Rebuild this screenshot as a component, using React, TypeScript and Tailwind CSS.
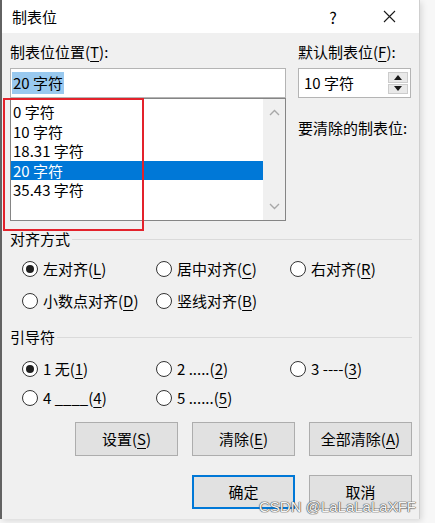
import React from "react";

type RadioItem = { label: string; key: string; checked?: boolean };

function Mn({ text, k }: { text: string; k: string }) {
  // text followed by (K) with the key underlined
  return (
    <span>
      {text}(<u className="underline-offset-[3px]">{k}</u>)
    </span>
  );
}

function Radio({ item }: { item: RadioItem }) {
  return (
    <div className="flex items-center h-[20px]">
      <div className="w-[16px] h-[16px] rounded-full border border-[#333333] bg-white flex items-center justify-center shrink-0">
        {item.checked && <div className="w-[8px] h-[8px] rounded-full bg-[#1f1f1f]" />}
      </div>
      <div className="ml-[5px] leading-[20px] whitespace-pre">
        <Mn text={item.label} k={item.key} />
      </div>
    </div>
  );
}

function Group({ title, lineWidth }: { title: string; lineWidth: string }) {
  return (
    <div className="flex items-center h-[20px] w-[402px]">
      <span className="leading-[20px]">{title}</span>
      <div className={`ml-auto h-px bg-[#dadada] ${lineWidth}`} />
    </div>
  );
}

function Button({ children, primary }: { children: React.ReactNode; primary?: boolean }) {
  return (
    <div
      className={
        "w-[103px] h-[34px] flex items-center justify-center bg-[#e1e1e1] leading-[20px] " +
        (primary
          ? "border border-[#0078d7] shadow-[inset_0_0_0_1px_#0078d7]"
          : "border border-[#adadad]")
      }
    >
      {children}
    </div>
  );
}

function Chevron({ up }: { up?: boolean }) {
  return (
    <svg width="11" height="7" viewBox="0 0 11 7" className="block">
      <polyline
        points={up ? "1,6 5.5,1.5 10,6" : "1,1 5.5,5.5 10,1"}
        fill="none"
        stroke="#a8a8a8"
        strokeWidth="1.4"
      />
    </svg>
  );
}

const tabs = ["0 字符", "10 字符", "18.31 字符", "20 字符", "35.43 字符"];

const alignRadios: RadioItem[] = [
  { label: "左对齐", key: "L", checked: true },
  { label: "居中对齐", key: "C" },
  { label: "右对齐", key: "R" },
  { label: "小数点对齐", key: "D" },
  { label: "竖线对齐", key: "B" },
];

const leaderRadios: RadioItem[] = [
  { label: "1 无", key: "1", checked: true },
  { label: "2 .....", key: "2" },
  { label: "3 ----", key: "3" },
  { label: "4 ____", key: "4" },
  { label: "5 ......", key: "5" },
];

export default function App() {
  return (
    <div className="w-[435px] h-[523px] relative overflow-hidden bg-[#f7f7f7] text-[15px] text-black font-['Noto_Sans_CJK_SC',sans-serif]">
      <div className="w-[420px] h-[519px] bg-[#f0f0f0] border-l-2 border-[#626262] border-r border-r-[#cfcfcf] shadow-[2px_2px_6px_rgba(0,0,0,0.12)] flex flex-col">
        {/* title bar */}
        <div className="h-[33px] bg-white flex items-center pl-[10px] shrink-0">
          <span className="leading-[20px]">制表位</span>
          <div className="ml-auto w-[40px] flex justify-center leading-[20px] text-[16px]">?</div>
          <div className="ml-[16px] mr-[10px] w-[40px] flex justify-center">
            <svg width="13" height="13" viewBox="0 0 13 13">
              <path d="M1 1 L12 12 M12 1 L1 12" stroke="#1a1a1a" strokeWidth="1.1" />
            </svg>
          </div>
        </div>

        <div className="pl-[8px] flex flex-col">
          {/* top */}
          <div className="flex mt-[9px]">
            <div className="w-[276px] flex flex-col">
              <div className="h-[20px] leading-[20px]">
                <Mn text="制表位位置" k="T" />:
              </div>
              <div className="mt-[6px] h-[30px] border border-[#b4b4b4] bg-white flex items-center pl-[1px]">
                <span className="bg-[#99c9ef] leading-[22px] px-[1px]">20 字符</span>
              </div>
              <div className="h-[123px] border border-[#858585] bg-white flex">
                <div className="flex-1 pt-[3px] flex flex-col">
                  {tabs.map((t) => (
                    <div
                      key={t}
                      className={
                        "h-[19.5px] leading-[19.5px] pl-[2px] " +
                        (t === "20 字符" ? "bg-[#0078d7] text-white" : "")
                      }
                    >
                      {t}
                    </div>
                  ))}
                </div>
                <div className="w-[22px] bg-[#f0f0f0] flex flex-col items-center justify-between py-[10px]">
                  <Chevron up />
                  <Chevron />
                </div>
              </div>
            </div>

            <div className="ml-[12px] w-[113px] flex flex-col">
              <div className="h-[20px] leading-[20px]">
                <Mn text="默认制表位" k="F" />:
              </div>
              <div className="mt-[6px] h-[30px] border border-[#b4b4b4] bg-white flex items-center">
                <span className="pl-[5px] leading-[20px]">10 字符</span>
                <div className="ml-auto mr-[2px] w-[20px] h-[22px] flex flex-col gap-px">
                  <div className="flex-1 bg-[#e9e9e9] border border-[#cccccc] flex items-center justify-center">
                    <svg width="8" height="5" viewBox="0 0 8 5">
                      <polygon points="0,5 4,0 8,5" fill="#1a1a1a" />
                    </svg>
                  </div>
                  <div className="flex-1 bg-[#e9e9e9] border border-[#cccccc] flex items-center justify-center">
                    <svg width="8" height="5" viewBox="0 0 8 5">
                      <polygon points="0,0 8,0 4,5" fill="#1a1a1a" />
                    </svg>
                  </div>
                </div>
              </div>
              <div className="mt-[20px] h-[20px] leading-[20px]">要清除的制表位:</div>
            </div>
          </div>

          {/* alignment */}
          <div className="mt-[8px]">
            <Group title="对齐方式" lineWidth="w-[340px]" />
          </div>
          <div className="mt-[10px] pl-[12px] grid grid-cols-[134px_134px_134px] gap-y-[12px]">
            {alignRadios.map((r) => (
              <Radio key={r.key} item={r} />
            ))}
          </div>

          {/* leader */}
          <div className="mt-[16px]">
            <Group title="引导符" lineWidth="w-[355px]" />
          </div>
          <div className="mt-[12px] pl-[12px] grid grid-cols-[134px_134px_134px] gap-y-[9px]">
            {leaderRadios.map((r) => (
              <Radio key={r.key} item={r} />
            ))}
          </div>

          {/* buttons */}
          <div className="mt-[14px] w-[402px] flex justify-end gap-[14px]">
            <Button>
              <Mn text="设置" k="S" />
            </Button>
            <Button>
              <Mn text="清除" k="E" />
            </Button>
            <Button>
              <Mn text="全部清除" k="A" />
            </Button>
          </div>
          <div className="mt-[19px] w-[402px] flex justify-end gap-[14px]">
            <Button primary>确定</Button>
            <Button>取消</Button>
          </div>
        </div>
      </div>

      {/* annotation */}
      <div className="absolute left-[3px] top-[98px] w-[141px] h-[133px] border-2 border-[#e3222b]" />

      {/* watermark */}
      <div className="absolute left-[259px] top-[497px] leading-[20px] text-[15px] font-['Liberation_Sans',sans-serif] text-[#f4f4f4] [text-shadow:0_0_1px_#4a4a4a,0_0_1px_#4a4a4a,0_0_1px_#4a4a4a]">
        CSDN @LaLaLaLaXFF
      </div>
    </div>
  );
}
